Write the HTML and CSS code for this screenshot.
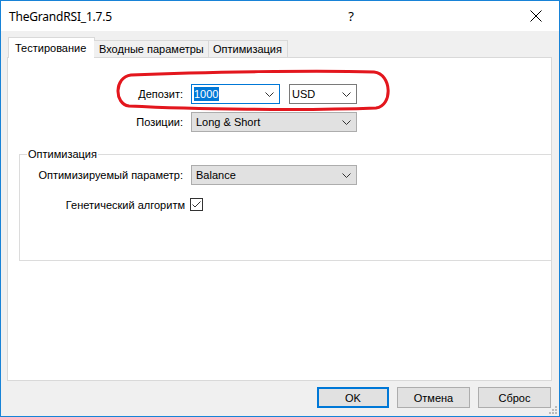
FILE: index.html
```html
<!DOCTYPE html>
<html lang="ru">
<head>
  <meta charset="UTF-8">
  <title>TheGrandRSI_1.7.5</title>
  <link rel="stylesheet" href="styles.css">
</head>
<body>

<div class="window">
  <div class="titlebar">
    <span class="title">TheGrandRSI_1.7.5</span>
    <span class="help">?</span>
    <svg class="close" width="12" height="12" viewBox="0 0 12 12">
      <path d="M0.5 0.5 L11.5 11.5 M11.5 0.5 L0.5 11.5" stroke="#000" stroke-width="1" fill="none"/>
    </svg>
  </div>

  <div class="content">
    <div class="tabs">
      <div class="tab active">Тестирование</div>
      <div class="tab tab-inputs">Входные параметры</div>
      <div class="tab tab-opt">Оптимизация</div>
    </div>

    <div class="panel">
      <div class="row">
        <span class="label">Депозит:</span>
        <div class="fields">
          <div class="combo edit focused deposit">
            <span class="sel">1000</span>
            <svg class="arrow" width="9" height="5" viewBox="0 0 9 5"><path d="M0.5 0.5 L4.5 4.5 L8.5 0.5" stroke="#333" fill="none"/></svg>
          </div>
          <div class="combo edit currency">
            <span class="val">USD</span>
            <svg class="arrow" width="9" height="5" viewBox="0 0 9 5"><path d="M0.5 0.5 L4.5 4.5 L8.5 0.5" stroke="#333" fill="none"/></svg>
          </div>
        </div>
      </div>
      <div class="row">
        <span class="label">Позиции:</span>
        <div class="combo list">
          <span class="val">Long &amp; Short</span>
          <svg class="arrow" width="9" height="5" viewBox="0 0 9 5"><path d="M0.5 0.5 L4.5 4.5 L8.5 0.5" stroke="#333" fill="none"/></svg>
        </div>
      </div>

      <div class="group">
        <span class="group-title">Оптимизация</span>
        <div class="group-row">
          <span class="label">Оптимизируемый параметр:</span>
          <div class="combo list">
            <span class="val">Balance</span>
            <svg class="arrow" width="9" height="5" viewBox="0 0 9 5"><path d="M0.5 0.5 L4.5 4.5 L8.5 0.5" stroke="#333" fill="none"/></svg>
          </div>
        </div>
        <div class="check-row">
          <span class="label">Генетический алгоритм</span>
          <svg class="checkbox" width="13" height="13" viewBox="0 0 13 13">
            <rect x="0.5" y="0.5" width="12" height="12" fill="#fff" stroke="#333"/>
            <path d="M2.5 6.5 L5 9 L10.5 3.5" stroke="#333" stroke-width="1" fill="none"/>
          </svg>
        </div>
      </div>
    </div>

    <div class="footer">
      <button class="btn default">OK</button>
      <button class="btn">Отмена</button>
      <button class="btn">Сброс</button>
    </div>
  </div>

  <svg class="grip" width="10" height="10" viewBox="0 0 10 10">
    <rect x="7" y="1" width="2" height="2" fill="#bcbcbc"/>
    <rect x="4" y="4" width="2" height="2" fill="#bcbcbc"/>
    <rect x="7" y="4" width="2" height="2" fill="#bcbcbc"/>
    <rect x="1" y="7" width="2" height="2" fill="#bcbcbc"/>
    <rect x="4" y="7" width="2" height="2" fill="#bcbcbc"/>
    <rect x="7" y="7" width="2" height="2" fill="#bcbcbc"/>
  </svg>

  <!-- red marker drawn over the deposit row -->
  <svg class="marker" width="560" height="417" viewBox="0 0 560 417">
    <path d="M131 75 C200 72 320 70 374 72 C392 74 393 106 376 108 C300 111 190 109 129 106 C114 104 114 77 131 75 Z"
          stroke="#e3161d" stroke-width="3" fill="none"/>
  </svg>
</div>

</body>
</html>
```

FILE: styles.css
```css
body {
  margin: 0;
  font-family: "Liberation Sans", Arial, sans-serif;
  font-size: 11px;
  color: #000;
  background: #fff;
}
.window {
  position: relative;
  width: 560px;
  height: 417px;
  box-sizing: border-box;
  border: 1px solid #1883d7;
  display: flex;
  flex-direction: column;
  overflow: hidden;
}
.titlebar {
  height: 30px;
  background: #fff;
  display: flex;
  align-items: center;
  padding-left: 8px;
}
.title {
  font-family: "Noto Sans", sans-serif;
  font-size: 12px;
  letter-spacing: -0.2px;
  flex: 1;
}
.help {
  font-family: "Noto Sans", sans-serif;
  font-size: 13px;
  margin-right: 176px;
}
.close {
  margin-right: 17px;
}
.content {
  flex: 1;
  background: #f0f0f0;
  padding-top: 6px;
  display: flex;
  flex-direction: column;
}
.tabs {
  display: flex;
  align-items: flex-end;
  height: 20px;
  padding-left: 7px;
  position: relative;
  z-index: 1;
}
.tab {
  box-sizing: border-box;
  height: 17px;
  border: 1px solid #d9d9d9;
  border-bottom: none;
  background: #f0f0f0;
  padding-left: 5px;
  line-height: 16px;
}
.tab.active {
  width: 87px;
  height: 21px;
  margin-bottom: -1px;
  background: #fff;
  padding-left: 6px;
  line-height: 20px;
}
.tab-inputs {
  width: 115px;
  margin-left: -1px;
  border-left: none;
}
.tab-opt {
  width: 80px;
  margin-left: -1px;
  padding-left: 4px;
}
.panel {
  box-sizing: border-box;
  width: 545px;
  height: 324px;
  margin-left: 6px;
  background: #fff;
  border: 1px solid #d9d9d9;
  padding-top: 26px;
  overflow: hidden;
}
.row {
  display: grid;
  grid-template-columns: 175px 166px;
  column-gap: 8px;
  align-items: center;
  height: 20px;
  margin-bottom: 8px;
}
.label {
  text-align: right;
  white-space: nowrap;
}
.fields {
  display: flex;
  gap: 9px;
}
.combo {
  box-sizing: border-box;
  height: 20px;
  display: flex;
  align-items: center;
  padding: 0 5px 0 4px;
  border: 1px solid #adadad;
  background: #e1e1e1;
}
.combo.edit {
  background: #fff;
  border-color: #7a7a7a;
  padding-left: 2px;
}
.combo.focused {
  border-color: #0078d7;
}
.deposit {
  width: 89px;
}
.currency {
  width: 68px;
  padding-left: 3px;
}
.combo .arrow {
  margin-left: auto;
}
.sel {
  background: #0078d7;
  color: #fff;
  line-height: 14px;
  padding-right: 1px;
}
.group {
  position: relative;
  box-sizing: border-box;
  height: 107px;
  margin: 22px 0 0 11px;
  border: 1px solid #dcdcdc;
  border-right: none;
  padding-top: 10px;
}
.group-title {
  position: absolute;
  top: -7px;
  left: 7px;
  background: #fff;
  padding: 0 1px;
  line-height: 13px;
}
.group-row {
  display: grid;
  grid-template-columns: 163px 166px;
  column-gap: 8px;
  align-items: center;
  height: 20px;
}
.check-row {
  display: grid;
  grid-template-columns: 165px 13px;
  column-gap: 5px;
  align-items: center;
  margin-top: 13px;
  height: 13px;
}
.checkbox {
  display: block;
}
.footer {
  display: flex;
  justify-content: flex-end;
  gap: 8px;
  padding: 6px 8px 0 0;
}
.btn {
  box-sizing: border-box;
  width: 73px;
  height: 21px;
  font-family: "Liberation Sans", Arial, sans-serif;
  font-size: 11px;
  color: #000;
  background: #e1e1e1;
  border: 1px solid #adadad;
  padding: 0;
}
.btn.default {
  width: 72px;
  border: 2px solid #0078d7;
}
.grip {
  position: absolute;
  right: 1px;
  bottom: 1px;
}
.marker {
  position: absolute;
  top: -1px;
  left: -1px;
  pointer-events: none;
}
```
